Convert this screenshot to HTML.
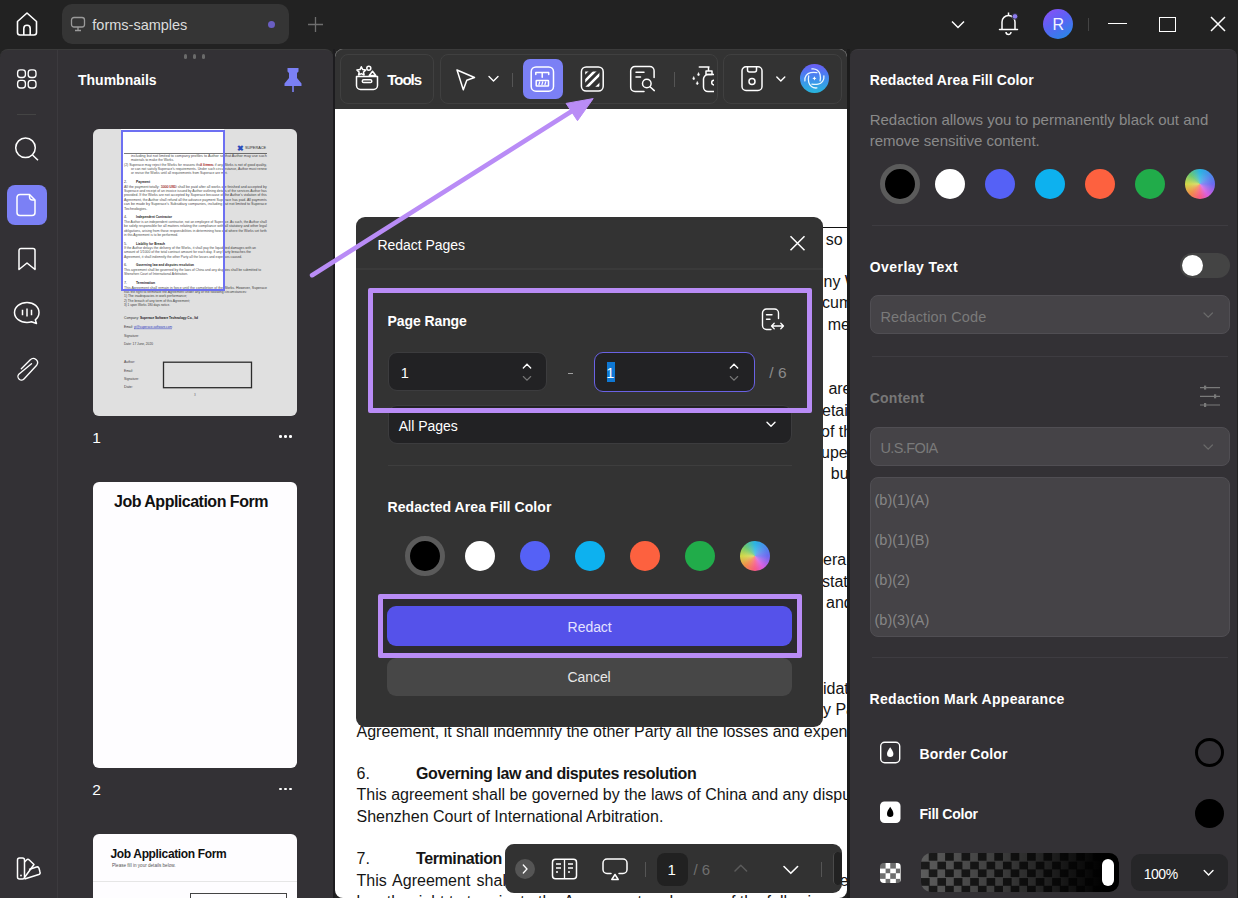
<!DOCTYPE html>
<html><head><meta charset="utf-8">
<style>
html,body{margin:0;padding:0;}
body{width:1238px;height:898px;overflow:hidden;position:relative;background:#222222;font-family:"Liberation Sans",sans-serif;}
.a{position:absolute;box-sizing:border-box;}
.t{position:absolute;white-space:nowrap;}
svg{overflow:visible}
</style></head><body>

<svg class="a" style="left:14px;top:10px;" width="26" height="28" viewBox="0 0 26 28"><path d="M3.5 11.5 L13 3 L22.5 11.5 V22.5 a2.5 2.5 0 0 1 -2.5 2.5 H6 a2.5 2.5 0 0 1 -2.5 -2.5 Z" fill="none" stroke="#fff" stroke-width="1.6" stroke-linejoin="round"/><path d="M9.8 25 V18.5 a3.2 3.2 0 0 1 6.4 0 V25" fill="none" stroke="#fff" stroke-width="1.6"/></svg>
<div class="a" style="left:62px;top:4px;width:227px;height:40px;background:#353535;border-radius:10px;"></div>
<svg class="a" style="left:70px;top:16px;" width="16" height="16" viewBox="0 0 16 16"><rect x="1.5" y="1.5" width="13" height="9.5" rx="2.5" fill="none" stroke="#9a9a9a" stroke-width="1.3"/><path d="M8 11 V14 M5 14.5 H11" stroke="#9a9a9a" stroke-width="1.3"/></svg>
<div class="t" style="left:92.3px;top:17.52px;font-size:14.5px;line-height:14.5px;color:#dcdcdc;font-weight:normal;letter-spacing:0px;">forms-samples</div>
<div class="a" style="left:268px;top:20.5px;width:7px;height:7px;background:#6a5ec2;border-radius:3.5px;"></div>
<svg class="a" style="left:308px;top:17px;" width="15" height="15" viewBox="0 0 15 15"><path d="M7.5 0 V15 M0 7.5 H15" stroke="#6e6e6e" stroke-width="1.3"/></svg>
<svg class="a" style="left:951px;top:20px;" width="14" height="9" viewBox="0 0 14 9"><path d="M1 1.5 L7 7.5 L13 1.5" fill="none" stroke="#fff" stroke-width="1.5"/></svg>
<svg class="a" style="left:998px;top:10px;" width="22" height="26" viewBox="0 0 22 26"><path d="M4 19 V12 a6.5 6.5 0 0 1 13 0 V19" fill="none" stroke="#fff" stroke-width="1.5"/><path d="M1.5 19.5 H19.5" stroke="#fff" stroke-width="1.5" stroke-linecap="round"/><path d="M8 22 a2.5 2.5 0 0 0 5 0" fill="none" stroke="#fff" stroke-width="1.5"/><path d="M10.5 2.5 V5" stroke="#fff" stroke-width="1.5"/><circle cx="17" cy="6.4" r="2.8" fill="#8d7cf0" stroke="#222" stroke-width="0.8"/></svg>
<div class="a" style="left:1043px;top:9px;width:30px;height:30px;border-radius:15px;background:linear-gradient(150deg,#8e4ef6 0%,#5a62f4 45%,#1f8fe4 100%);"></div>
<div class="t" style="left:1052.6px;top:16.55px;font-size:16px;line-height:16px;color:#f4f4ff;font-weight:normal;letter-spacing:0px;">R</div>
<div class="a" style="left:1088px;top:18px;width:1px;height:13px;background:#444;border-radius:0px;"></div>
<div class="a" style="left:1108px;top:23px;width:18.5px;height:1.3px;background:#fff;border-radius:0px;"></div>
<div class="a" style="left:1158.5px;top:17px;width:17.5px;height:14.5px;background:transparent;border-radius:0px;border:1.5px solid #fff;"></div>
<svg class="a" style="left:1210px;top:16px;" width="16" height="16" viewBox="0 0 16 16"><path d="M1 1 L15 15 M15 1 L1 15" stroke="#fff" stroke-width="1.5"/></svg>
<div class="a" style="left:0px;top:49px;width:333px;height:849px;background:#333135;border-radius:8px;border-top:1px solid #3b3b3b;border-bottom-left-radius:0;border-bottom-right-radius:0;"></div>
<div class="a" style="left:57px;top:50px;width:1px;height:848px;background:#3c3a3e;border-radius:0px;"></div>
<svg class="a" style="left:14px;top:66px;" width="26" height="26" viewBox="0 0 26 26"><rect x="3.6" y="3.9" width="7.8" height="7.6" rx="2.8" fill="none" stroke="#fff" stroke-width="1.35"/><rect x="3.6" y="14.4" width="7.8" height="7.6" rx="2.8" fill="none" stroke="#fff" stroke-width="1.35"/><rect x="14.2" y="3.9" width="7.8" height="7.6" rx="2.8" fill="none" stroke="#fff" stroke-width="1.35"/><rect x="14.2" y="14.4" width="7.8" height="7.6" rx="2.8" fill="none" stroke="#fff" stroke-width="1.35"/></svg>
<div class="a" style="left:16.5px;top:113.5px;width:19.5px;height:1px;background:#444;border-radius:0px;"></div>
<svg class="a" style="left:12px;top:134px;" width="28" height="28" viewBox="0 0 28 28"><circle cx="13.5" cy="13.8" r="9.8" fill="none" stroke="#fff" stroke-width="1.5"/><path d="M20.5 21 L26 26.3" stroke="#fff" stroke-width="1.5"/></svg>
<div class="a" style="left:7px;top:185px;width:40px;height:40px;background:#7b80f5;border-radius:8px;"></div>
<svg class="a" style="left:15px;top:192px;" width="24" height="26" viewBox="0 0 24 26"><path d="M5 2.5 H14.5 L20 8 V20.5 a3 3 0 0 1 -3 3 H5 a3 3 0 0 1 -3 -3 V5.5 a3 3 0 0 1 3 -3 Z" fill="none" stroke="#fff" stroke-width="1.5" stroke-linejoin="round"/><path d="M14.5 2.5 V5 a3 3 0 0 0 3 3 H20" fill="none" stroke="#fff" stroke-width="1.4"/></svg>
<svg class="a" style="left:16px;top:247px;" width="22" height="26" viewBox="0 0 22 26"><path d="M3 3.5 a2 2 0 0 1 2 -2 H17 a2 2 0 0 1 2 2 V22.5 L11 16 L3 22.5 Z" fill="none" stroke="#fff" stroke-width="1.5" stroke-linejoin="round"/></svg>
<svg class="a" style="left:12px;top:300px;" width="30" height="28" viewBox="0 0 30 28"><path d="M15 2.5 C22 2.5 27 6.8 27 12.5 C27 15.5 25.5 18 23.3 19.8 L24.5 23.5 L19.5 21.8 C18 22.3 16.5 22.5 15 22.5 C8 22.5 2.5 18.2 2.5 12.5 C2.5 6.8 8 2.5 15 2.5 Z" fill="none" stroke="#fff" stroke-width="1.5" stroke-linejoin="round"/><path d="M10.5 9.8 V15.2 M15 8.5 V16.5 M19.5 9.8 V15.2" stroke="#fff" stroke-width="1.5"/></svg>
<svg class="a" style="left:14px;top:355px;" width="28" height="30" viewBox="0 0 28 30"><path transform="translate(-14 -355)" d="M21.3 368.7 L30.3 359.8 A4.2 4.2 0 0 1 36.7 365.2 L24.2 378.8 A3.5 3.5 0 0 1 18.8 374.2 L31.5 363.8" fill="none" stroke="#fff" stroke-width="1.35" stroke-linecap="round" stroke-linejoin="round"/></svg>
<svg class="a" style="left:14px;top:855px;" width="28" height="28" viewBox="0 0 28 28"><rect x="3.5" y="3" width="7" height="21" rx="2" fill="none" stroke="#fff" stroke-width="1.5"/><path d="M10.5 7 L12.5 5 a2 2 0 0 1 2.8 0 L20 9.5 L10.5 22.5" fill="none" stroke="#fff" stroke-width="1.5" stroke-linejoin="round"/><path d="M15 14.5 L22.5 12 a2 2 0 0 1 2.5 1.3 L26 17 a2 2 0 0 1 -1.2 2.5 L10.5 24" fill="none" stroke="#fff" stroke-width="1.5" stroke-linejoin="round"/><circle cx="7" cy="20.5" r="0.9" fill="#fff"/></svg>
<div class="a" style="left:183.5px;top:54px;width:3px;height:5px;background:#6a6a6a;border-radius:1.5px;"></div>
<div class="a" style="left:192.5px;top:54px;width:3px;height:5px;background:#6a6a6a;border-radius:1.5px;"></div>
<div class="a" style="left:201.5px;top:54px;width:3px;height:5px;background:#6a6a6a;border-radius:1.5px;"></div>
<div class="t" style="left:78px;top:73.15px;font-size:14px;line-height:14px;color:#fff;font-weight:bold;letter-spacing:0px;">Thumbnails</div>
<svg class="a" style="left:282px;top:66px;" width="22" height="28" viewBox="0 0 22 28"><path d="M5.5 2 H16.5 V5.5 L15 7 V12 L19.5 17.5 V20 H2.5 V17.5 L7 12 V7 L5.5 5.5 Z" fill="#7b80f5"/><path d="M11 20 V26" stroke="#7b80f5" stroke-width="1.6"/></svg>
<div class="a" style="left:93px;top:129px;width:204px;height:287px;background:#fff;border-radius:6px;overflow:hidden;">
<svg class="a" style="left:0;top:0;font-family:'Liberation Sans',sans-serif" width="204" height="287"><rect x="31.0" y="24.0" width="143.0" height="0.7" fill="rgba(30,30,30,0.85)"/><text x="144" y="21.5" font-size="7.5" fill="#3358d8" font-weight="bold">&#10006;</text><text x="152.0" y="20.1" font-size="4" fill="#333" font-weight="normal" textLength="21.0" lengthAdjust="spacingAndGlyphs">SUPERACE</text><text x="38.0" y="27.9" font-size="3.7" fill="#4a4a4a" font-weight="normal" textLength="135.7" lengthAdjust="spacingAndGlyphs">including but not limited to company profiles to Author so that Author may use such</text><text x="38.0" y="32.3" font-size="3.7" fill="#4a4a4a" font-weight="normal" textLength="43.0" lengthAdjust="spacingAndGlyphs">materials to make the Works.</text><text x="31.0" y="36.8" font-size="3.7" fill="#4a4a4a" font-weight="normal" textLength="142.7" lengthAdjust="spacingAndGlyphs">(2)      Superace may reject the Works for reasons that 3 times if any Works is not of good quality,</text><text x="38.0" y="41.1" font-size="3.7" fill="#4a4a4a" font-weight="normal" textLength="135.7" lengthAdjust="spacingAndGlyphs">or can not satisfy Superace's requirements. Under such circumstance, Author must renew</text><text x="38.0" y="45.3" font-size="3.7" fill="#4a4a4a" font-weight="normal" textLength="96.5" lengthAdjust="spacingAndGlyphs">or revise the Works until all requirements from Superace are met.</text><text x="31.0" y="58.7" font-size="3.7" fill="#4a4a4a" font-weight="normal" textLength="142.7" lengthAdjust="spacingAndGlyphs">All the payment totally: 1000 USD shall be paid after all works are finished and accepted by</text><text x="31.0" y="63.1" font-size="3.7" fill="#4a4a4a" font-weight="normal" textLength="142.7" lengthAdjust="spacingAndGlyphs">Superace and receipt of an invoice issued by Author outlining details of the services Author has</text><text x="31.0" y="67.4" font-size="3.7" fill="#4a4a4a" font-weight="normal" textLength="142.7" lengthAdjust="spacingAndGlyphs">provided. If the Works are not accepted by Superace because of the Author's violation of this</text><text x="31.0" y="71.8" font-size="3.7" fill="#4a4a4a" font-weight="normal" textLength="142.7" lengthAdjust="spacingAndGlyphs">Agreement, the Author shall refund all the advance payment Superace has paid. All payments</text><text x="31.0" y="76.2" font-size="3.7" fill="#4a4a4a" font-weight="normal" textLength="142.7" lengthAdjust="spacingAndGlyphs">can be made by Superace's Subsidiary companies, including but not limited to Superace</text><text x="31.0" y="80.5" font-size="3.7" fill="#4a4a4a" font-weight="normal" textLength="23.3" lengthAdjust="spacingAndGlyphs">Technologies.</text><text x="31.0" y="93.7" font-size="3.7" fill="#4a4a4a" font-weight="normal" textLength="142.7" lengthAdjust="spacingAndGlyphs">The Author is an independent contractor, not an employee of Superace. As such, the Author shall</text><text x="31.0" y="98.1" font-size="3.7" fill="#4a4a4a" font-weight="normal" textLength="142.7" lengthAdjust="spacingAndGlyphs">be solely responsible for all matters relating the compliance with all statutory and other legal</text><text x="31.0" y="102.5" font-size="3.7" fill="#4a4a4a" font-weight="normal" textLength="142.7" lengthAdjust="spacingAndGlyphs">obligations, arising from those responsibilities in determining how and where the Works set forth</text><text x="31.0" y="106.8" font-size="3.7" fill="#4a4a4a" font-weight="normal" textLength="54.0" lengthAdjust="spacingAndGlyphs">in this Agreement is to be performed.</text><text x="31.0" y="119.9" font-size="3.7" fill="#4a4a4a" font-weight="normal" textLength="132.0" lengthAdjust="spacingAndGlyphs">If the Author delays the delivery of the Works, it shall pay the liquidated damages with an</text><text x="31.0" y="124.3" font-size="3.7" fill="#4a4a4a" font-weight="normal" textLength="127.0" lengthAdjust="spacingAndGlyphs">amount of 1/1000 of the total contract amount for each day. If any Party breaches the</text><text x="31.0" y="128.6" font-size="3.7" fill="#4a4a4a" font-weight="normal" textLength="118.0" lengthAdjust="spacingAndGlyphs">Agreement, it shall indemnify the other Party all the losses and expenses caused.</text><text x="31.0" y="141.8" font-size="3.7" fill="#4a4a4a" font-weight="normal" textLength="137.0" lengthAdjust="spacingAndGlyphs">This agreement shall be governed by the laws of China and any disputes shall be submitted to</text><text x="31.0" y="146.2" font-size="3.7" fill="#4a4a4a" font-weight="normal" textLength="64.0" lengthAdjust="spacingAndGlyphs">Shenzhen Court of International Arbitration.</text><text x="31.0" y="159.7" font-size="3.7" fill="#4a4a4a" font-weight="normal" textLength="143.0" lengthAdjust="spacingAndGlyphs">This Agreement shall remain in force until the completion of the Works. However, Superace</text><text x="31.0" y="163.9" font-size="3.7" fill="#4a4a4a" font-weight="normal" textLength="123.0" lengthAdjust="spacingAndGlyphs">has the right to terminate the Agreement under any of the following circumstances:</text><text x="31.0" y="168.3" font-size="3.7" fill="#4a4a4a" font-weight="normal" textLength="63.0" lengthAdjust="spacingAndGlyphs">1) The inadequacies in work performance;</text><text x="31.0" y="172.8" font-size="3.7" fill="#4a4a4a" font-weight="normal" textLength="66.0" lengthAdjust="spacingAndGlyphs">2) The breach of any term of this Agreement;</text><text x="31.0" y="177.0" font-size="3.7" fill="#4a4a4a" font-weight="normal" textLength="46.0" lengthAdjust="spacingAndGlyphs">3) 1 upon Works 180 days notice.</text><text x="31.0" y="207.8" font-size="3.7" fill="#4a4a4a" font-weight="normal" textLength="15.0" lengthAdjust="spacingAndGlyphs">Signature:</text><text x="31.0" y="216.3" font-size="3.7" fill="#4a4a4a" font-weight="normal" textLength="29.0" lengthAdjust="spacingAndGlyphs">Date: 17 June, 2020</text><text x="31.0" y="233.9" font-size="3.7" fill="#4a4a4a" font-weight="normal" textLength="11.0" lengthAdjust="spacingAndGlyphs">Author:</text><text x="31.0" y="242.5" font-size="3.7" fill="#4a4a4a" font-weight="normal" textLength="9.0" lengthAdjust="spacingAndGlyphs">Email:</text><text x="31.0" y="250.5" font-size="3.7" fill="#4a4a4a" font-weight="normal" textLength="15.0" lengthAdjust="spacingAndGlyphs">Signature:</text><text x="31.0" y="259.1" font-size="3.7" fill="#4a4a4a" font-weight="normal" textLength="9.0" lengthAdjust="spacingAndGlyphs">Date:</text><text x="31.0" y="54.3" font-size="3.7" fill="#333" font-weight="normal">2.</text><text x="43.0" y="54.3" font-size="3.7" fill="#222" font-weight="bold" textLength="14.0" lengthAdjust="spacingAndGlyphs">Payment</text><text x="31.0" y="89.3" font-size="3.7" fill="#333" font-weight="normal">4.</text><text x="43.0" y="89.3" font-size="3.7" fill="#222" font-weight="bold" textLength="36.0" lengthAdjust="spacingAndGlyphs">Independent Contractor</text><text x="31.0" y="115.5" font-size="3.7" fill="#333" font-weight="normal">5.</text><text x="43.0" y="115.5" font-size="3.7" fill="#222" font-weight="bold" textLength="29.0" lengthAdjust="spacingAndGlyphs">Liability for Breach</text><text x="31.0" y="137.4" font-size="3.7" fill="#333" font-weight="normal">6.</text><text x="43.0" y="137.4" font-size="3.7" fill="#222" font-weight="bold" textLength="58.0" lengthAdjust="spacingAndGlyphs">Governing law and disputes resolution</text><text x="31.0" y="155.3" font-size="3.7" fill="#333" font-weight="normal">7.</text><text x="43.0" y="155.3" font-size="3.7" fill="#222" font-weight="bold" textLength="19.0" lengthAdjust="spacingAndGlyphs">Termination</text><text x="31.0" y="190.3" font-size="3.7" fill="#3a3a3a" font-weight="normal" textLength="15.0" lengthAdjust="spacingAndGlyphs">Company:</text><text x="47.0" y="190.3" font-size="3.7" fill="#222" font-weight="bold" textLength="58.0" lengthAdjust="spacingAndGlyphs">Superace Software Technology Co., ltd</text><text x="31.0" y="199.3" font-size="3.7" fill="#3a3a3a" font-weight="normal" textLength="9.0" lengthAdjust="spacingAndGlyphs">Email:</text><text x="41.0" y="199.3" font-size="3.7" fill="#3344dd" font-weight="normal" textLength="38.0" lengthAdjust="spacingAndGlyphs">yt@superace-software.com</text><rect x="41.0" y="199.6" width="38.0" height="0.5" fill="#3344dd"/><text x="68.6" y="58.7" font-size="3.7" fill="#e03030" font-weight="normal" textLength="14.2" lengthAdjust="spacingAndGlyphs">1000 USD</text><text x="107.0" y="36.8" font-size="3.7" fill="#e03030" font-weight="normal" textLength="13.0" lengthAdjust="spacingAndGlyphs">3 times</text><rect x="70.5" y="233.2" width="88" height="25.5" fill="none" stroke="#333" stroke-width="1.3"/><text x="101.0" y="267.3" font-size="3" fill="#777" font-weight="normal">3</text></svg>
<div class="a" style="left:0;top:0;width:28px;height:287px;background:rgba(0,0,0,0.12)"></div>
<div class="a" style="left:131px;top:0;width:73px;height:287px;background:rgba(0,0,0,0.12)"></div>
<div class="a" style="left:28px;top:161px;width:103px;height:126px;background:rgba(0,0,0,0.12)"></div>
<div class="a" style="left:27.5px;top:0.5px;width:104px;height:161px;border:2.5px solid #6d70f2;"></div>
</div>
<div class="t" style="left:92.3px;top:430.08px;font-size:15.5px;line-height:15.5px;color:#fff;font-weight:normal;letter-spacing:0px;">1</div>
<div class="a" style="left:279.2px;top:435px;width:2.6px;height:2.6px;background:#fff;border-radius:1.3px;"></div>
<div class="a" style="left:284.2px;top:435px;width:2.6px;height:2.6px;background:#fff;border-radius:1.3px;"></div>
<div class="a" style="left:289.2px;top:435px;width:2.6px;height:2.6px;background:#fff;border-radius:1.3px;"></div>
<div class="a" style="left:93px;top:482px;width:204px;height:286px;background:#fefdff;border-radius:6px;"></div>
<div class="t" style="left:114px;top:493.95px;font-size:16px;line-height:16px;color:#111;font-weight:bold;letter-spacing:-0.5px;">Job Application Form</div>
<div class="t" style="left:92.3px;top:782.08px;font-size:15.5px;line-height:15.5px;color:#fff;font-weight:normal;letter-spacing:0px;">2</div>
<div class="a" style="left:279.2px;top:787.5px;width:2.6px;height:2.6px;background:#fff;border-radius:1.3px;"></div>
<div class="a" style="left:284.2px;top:787.5px;width:2.6px;height:2.6px;background:#fff;border-radius:1.3px;"></div>
<div class="a" style="left:289.2px;top:787.5px;width:2.6px;height:2.6px;background:#fff;border-radius:1.3px;"></div>
<div class="a" style="left:93px;top:834px;width:204px;height:80px;background:#fefdff;border-radius:6px;"></div>
<div class="t" style="left:110.5px;top:847.84px;font-size:12px;line-height:12px;color:#111;font-weight:bold;letter-spacing:-0.35px;">Job Application Form</div>
<div class="t" style="left:112px;top:864.11px;font-size:4.6px;line-height:4.6px;color:#555;font-weight:normal;letter-spacing:0px;">Please fill in your details below.</div>
<div class="a" style="left:93px;top:881px;width:204px;height:1px;background:#e6e6e6;border-radius:0px;"></div>
<div class="a" style="left:189.5px;top:892.5px;width:97px;height:10px;background:transparent;border-radius:0px;border:1px solid #444;"></div>
<div class="a" style="left:333px;top:49px;width:2px;height:849px;background:#1d1c1f;border-radius:0px;"></div>
<div class="a" style="left:847px;top:49px;width:3px;height:849px;background:#1c1c1c;border-radius:0px;"></div>
<div class="a" style="left:335px;top:49px;width:512px;height:849px;background:#fff;border-radius:8px;overflow:hidden;">
<div class="a" style="left:488px;top:178px;width:40px;height:1px;background:#111"></div>
<div class="t" style="left:490.7px;top:182.85px;font-size:16px;line-height:16px;color:#151515;font-weight:normal;letter-spacing:0px;">so</div>
<div class="t" style="left:488.5px;top:224.95px;font-size:16px;line-height:16px;color:#151515;font-weight:normal;letter-spacing:0px;">ny W</div>
<div class="t" style="left:487.0px;top:246.35px;font-size:16px;line-height:16px;color:#151515;font-weight:normal;letter-spacing:0px;">cum</div>
<div class="t" style="left:492.7px;top:267.75px;font-size:16px;line-height:16px;color:#151515;font-weight:normal;letter-spacing:0px;">me</div>
<div class="t" style="left:493.4px;top:332.15px;font-size:16px;line-height:16px;color:#151515;font-weight:normal;letter-spacing:0px;">are</div>
<div class="t" style="left:487.0px;top:353.55px;font-size:16px;line-height:16px;color:#151515;font-weight:normal;letter-spacing:0px;">etail</div>
<div class="t" style="left:486.0px;top:374.55px;font-size:16px;line-height:16px;color:#151515;font-weight:normal;letter-spacing:0px;">of th</div>
<div class="t" style="left:486.0px;top:395.65px;font-size:16px;line-height:16px;color:#151515;font-weight:normal;letter-spacing:0px;">uper</div>
<div class="t" style="left:495.8px;top:417.05px;font-size:16px;line-height:16px;color:#151515;font-weight:normal;letter-spacing:0px;">bu</div>
<div class="t" style="left:488.0px;top:503.45px;font-size:16px;line-height:16px;color:#151515;font-weight:normal;letter-spacing:0px;">era</div>
<div class="t" style="left:487.0px;top:524.55px;font-size:16px;line-height:16px;color:#151515;font-weight:normal;letter-spacing:0px;">stat</div>
<div class="t" style="left:491.0px;top:545.55px;font-size:16px;line-height:16px;color:#151515;font-weight:normal;letter-spacing:0px;">and</div>
<div class="t" style="left:488.0px;top:631.75px;font-size:16px;line-height:16px;color:#151515;font-weight:normal;letter-spacing:0px;">idat</div>
<div class="t" style="left:488.0px;top:652.85px;font-size:16px;line-height:16px;color:#151515;font-weight:normal;letter-spacing:0px;">y Pa</div>
<div class="t" style="left:21.5px;top:674.95px;font-size:16px;line-height:16px;color:#151515;font-weight:normal;letter-spacing:0px;">Agreement, it shall indemnify the other Party all the losses and expenses</div>
<div class="t" style="left:21.5px;top:716.85px;font-size:16px;line-height:16px;color:#151515;font-weight:normal;letter-spacing:0px;">6.</div>
<div class="t" style="left:81.0px;top:716.85px;font-size:16px;line-height:16px;color:#151515;font-weight:bold;letter-spacing:-0.4px;">Governing law and disputes resolution</div>
<div class="t" style="left:21.5px;top:738.45px;font-size:16px;line-height:16px;color:#151515;font-weight:normal;letter-spacing:0px;">This agreement shall be governed by the laws of China and any disputes</div>
<div class="t" style="left:21.5px;top:759.85px;font-size:16px;line-height:16px;color:#151515;font-weight:normal;letter-spacing:0px;">Shenzhen Court of International Arbitration.</div>
<div class="t" style="left:21.5px;top:802.45px;font-size:16px;line-height:16px;color:#151515;font-weight:normal;letter-spacing:0px;">7.</div>
<div class="t" style="left:81.0px;top:802.45px;font-size:16px;line-height:16px;color:#151515;font-weight:bold;letter-spacing:-0.4px;">Termination</div>
<div class="t" style="left:21.5px;top:823.75px;font-size:16px;line-height:16px;color:#151515;font-weight:normal;letter-spacing:0px;word-spacing:1.8px;">This Agreement shall remain in force</div>
<div class="t" style="left:504.8px;top:823.75px;font-size:16px;line-height:16px;color:#151515;font-weight:normal;letter-spacing:0px;">e</div>
<div class="t" style="left:21.5px;top:845.05px;font-size:16px;line-height:16px;color:#151515;font-weight:normal;letter-spacing:0px;">has the right to terminate the Agreement under any of the following</div>
</div>
<div class="a" style="left:335px;top:49px;width:512px;height:60px;background:#333333;border-radius:8px 8px 0 0;border-top:1px solid #3b3b3b;overflow:hidden;">
</div>
<div class="a" style="left:340px;top:54px;width:94px;height:50px;border:1px solid #404040;border-radius:8px;background:#333333;"></div>
<div class="a" style="left:440px;top:54px;width:278px;height:50px;border:1px solid #404040;border-radius:8px;background:#333333;"></div>
<div class="a" style="left:723px;top:54px;width:119px;height:50px;border:1px solid #404040;border-radius:8px;background:#333333;"></div>
<svg class="a" style="left:354px;top:64px;" width="26" height="28" viewBox="0 0 26 28"><path d="M2.5 12.5 H23.5 V21.5 a4 4 0 0 1 -4 4 H6.5 a4 4 0 0 1 -4 -4 Z" fill="none" stroke="#fff" stroke-width="1.5" stroke-linecap="round" stroke-linejoin="round"/><rect x="8.3" y="15.8" width="9.5" height="2.7" rx="1.35" fill="none" stroke="#fff" stroke-width="1.5" stroke-linecap="round" stroke-linejoin="round"/><path d="M7.3 2.8 L8.7 5.6 L11.8 6 L9.5 8.1 L10.1 11 L7.3 9.6 L4.6 11 L5.1 8.1 L2.9 6 L6 5.6 Z" fill="none" stroke="#fff" stroke-width="1.5" stroke-linecap="round" stroke-linejoin="round"/><circle cx="14.8" cy="4.2" r="2" fill="none" stroke="#fff" stroke-width="1.5" stroke-linecap="round" stroke-linejoin="round"/><path d="M18.5 7.2 L21.8 11.5 H15.3 Z" fill="none" stroke="#fff" stroke-width="1.5" stroke-linecap="round" stroke-linejoin="round"/></svg>
<div class="t" style="left:387.2px;top:72.20px;font-size:15px;line-height:15px;color:#fff;font-weight:bold;letter-spacing:-1px;">Tools</div>
<svg class="a" style="left:454px;top:67px;" width="24" height="26" viewBox="0 0 24 26"><path d="M3 3 L20.5 10.5 L12.8 13.2 L9.3 22.8 Z" fill="none" stroke="#fff" stroke-width="1.5" stroke-linecap="round" stroke-linejoin="round"/></svg>
<svg class="a" style="left:487px;top:74px;" width="14" height="10" viewBox="0 0 14 10"><path d="M2 2.5 L6.5 7 L11 2.5" fill="none" stroke="#fff" stroke-width="1.4" stroke-linecap="round" stroke-linejoin="round"/></svg>
<div class="a" style="left:512px;top:72.5px;width:1px;height:14.5px;background:#555;border-radius:0px;"></div>
<div class="a" style="left:523px;top:59px;width:40px;height:40px;background:#7b80f5;border-radius:7px;"></div>
<svg class="a" style="left:529px;top:65px;" width="27" height="28" viewBox="0 0 27 28"><rect x="2.2" y="1.9" width="22.3" height="24.3" rx="4.8" fill="none" stroke="#fff" stroke-width="1.5" stroke-linecap="round" stroke-linejoin="round"/><path d="M6.8 9.6 V7.4 H19.7 V9.6 M13.2 7.4 V12.2" fill="none" stroke="#fff" stroke-width="1.5" stroke-linecap="round" stroke-linejoin="round"/><rect x="7.2" y="15.6" width="12.3" height="5.3" rx="0.5" fill="none" stroke="#fff" stroke-width="1.5" stroke-linecap="round" stroke-linejoin="round"/><path d="M9.8 20 L10.8 16.5 M12.8 20 L13.8 16.5 M15.8 20 L16.8 16.5" stroke="#fff" stroke-width="1.2"/></svg>
<svg class="a" style="left:579px;top:65px;" width="27" height="28" viewBox="0 0 27 28"><rect x="2.4" y="1.9" width="21.8" height="24.2" rx="4.8" fill="none" stroke="#fff" stroke-width="1.5" stroke-linecap="round" stroke-linejoin="round"/><defs><clipPath id="hc"><rect x="6.2" y="6.4" width="14.2" height="15.4"/></clipPath></defs><g clip-path="url(#hc)" stroke="#fff" stroke-width="2.6"><path d="M0 14 L14 0 M0 22 L22 0 M4 26 L26 4 M12 28 L28 12 M18 30 L30 18"/></g></svg>
<svg class="a" style="left:629px;top:65px;" width="28" height="28" viewBox="0 0 28 28"><path d="M15 26.5 H6 a4.3 4.3 0 0 1 -4.3 -4.3 V5.8 a4.3 4.3 0 0 1 4.3 -4.3 H20.8 a4.3 4.3 0 0 1 4.3 4.3 V12.5" fill="none" stroke="#fff" stroke-width="1.5" stroke-linecap="round" stroke-linejoin="round"/><path d="M7 7.2 H15 M7 12 H11.5" fill="none" stroke="#fff" stroke-width="1.5" stroke-linecap="round" stroke-linejoin="round"/><circle cx="17.8" cy="18.5" r="4.3" fill="none" stroke="#fff" stroke-width="1.5" stroke-linecap="round" stroke-linejoin="round"/><path d="M21 21.8 L25.3 25.6" fill="none" stroke="#fff" stroke-width="1.5" stroke-linecap="round" stroke-linejoin="round"/></svg>
<div class="a" style="left:673.5px;top:72.2px;width:1px;height:14.5px;background:#555;border-radius:0px;"></div>
<div class="a" style="left:688px;top:60px;width:25.5px;height:36px;overflow:hidden;">
<svg class="a" style="left:0;top:0" width="40" height="36" viewBox="0 0 40 36"><path d="M11.3 6.9 H21 M20.5 6.9 V11 M18 11 H24 V14.5 H18 Z" fill="none" stroke="#fff" stroke-width="1.5" stroke-linecap="round" stroke-linejoin="round"/><path d="M30 14.6 H20 a4.5 4.5 0 0 0 -4.5 4.5 V27 a4.5 4.5 0 0 0 4.5 4.5 H30" fill="none" stroke="#fff" stroke-width="1.5" stroke-linecap="round" stroke-linejoin="round"/><circle cx="26" cy="22.6" r="2.3" fill="none" stroke="#fff" stroke-width="1.5" stroke-linecap="round" stroke-linejoin="round"/><path d="M10.5 12.6 l1 2.3 a1.1 1.1 0 0 1 -2 0 Z M5.7 16.6 l1 2.3 a1.1 1.1 0 0 1 -2 0 Z M9.3 21.5 l1 2.3 a1.1 1.1 0 0 1 -2 0 Z" fill="#fff" stroke="#fff" stroke-width="0.6"/></svg>
</div>
<svg class="a" style="left:740px;top:65px;" width="24" height="27" viewBox="0 0 24 27"><path d="M6 1.8 H18 a4 4 0 0 1 4 4 V21.5 a4 4 0 0 1 -4 4 H6 a4 4 0 0 1 -4 -4 V5.8 a4 4 0 0 1 4 -4 Z" fill="none" stroke="#fff" stroke-width="1.5" stroke-linecap="round" stroke-linejoin="round"/><path d="M7.5 2 V5 a2 2 0 0 0 2 2 H14.5 a2 2 0 0 0 2 -2 V2" fill="none" stroke="#fff" stroke-width="1.5" stroke-linecap="round" stroke-linejoin="round"/><circle cx="12" cy="16.5" r="3" fill="none" stroke="#fff" stroke-width="1.5" stroke-linecap="round" stroke-linejoin="round"/></svg>
<svg class="a" style="left:775px;top:75px;" width="12" height="9" viewBox="0 0 12 9"><path d="M1.8 2 L5.8 6 L9.8 2" fill="none" stroke="#fff" stroke-width="1.4" stroke-linecap="round" stroke-linejoin="round"/></svg>
<div class="a" style="left:799.8px;top:63.9px;width:28.8px;height:28.8px;border-radius:50%;background:linear-gradient(180deg,#6c5df5 0%,#4f78f2 30%,#3d95ea 60%,#27b5dc 100%);"></div>
<svg class="a" style="left:799.8px;top:63.9px;" width="29" height="29" viewBox="0 0 29 29"><path transform="rotate(0 14.4 14.4)" d="M4.9 16.9 C4.3 12.6 7.2 9.4 10.6 8.7 C12.8 8.2 15 8.3 16.9 8.7" fill="none" stroke="#e9f7ff" stroke-width="1.3" stroke-linecap="round"/><path transform="rotate(90 14.4 14.4)" d="M4.9 16.9 C4.3 12.6 7.2 9.4 10.6 8.7 C12.8 8.2 15 8.3 16.9 8.7" fill="none" stroke="#e9f7ff" stroke-width="1.3" stroke-linecap="round"/><path transform="rotate(180 14.4 14.4)" d="M4.9 16.9 C4.3 12.6 7.2 9.4 10.6 8.7 C12.8 8.2 15 8.3 16.9 8.7" fill="none" stroke="#e9f7ff" stroke-width="1.3" stroke-linecap="round"/><path transform="rotate(270 14.4 14.4)" d="M4.9 16.9 C4.3 12.6 7.2 9.4 10.6 8.7 C12.8 8.2 15 8.3 16.9 8.7" fill="none" stroke="#e9f7ff" stroke-width="1.3" stroke-linecap="round"/><path d="M14.4 12.3 L15.1 13.7 L16.5 14.4 L15.1 15.1 L14.4 16.5 L13.7 15.1 L12.3 14.4 L13.7 13.7 Z" fill="#fff"/></svg>
<div class="a" style="left:505px;top:844px;width:337px;height:49px;background:#323232;border-radius:9px;"></div>
<div class="a" style="left:514.7px;top:859px;width:20px;height:20px;background:#555555;border-radius:10px;"></div>
<svg class="a" style="left:520px;top:863px;" width="10" height="12" viewBox="0 0 10 12"><path d="M3.3 2 L7 6 L3.3 10" fill="none" stroke="#fff" stroke-width="1.3" stroke-linecap="round"/></svg>
<svg class="a" style="left:551px;top:858px;" width="27" height="22" viewBox="0 0 27 22"><rect x="1.5" y="1.2" width="24" height="19.5" rx="3" fill="none" stroke="#fff" stroke-width="1.5" stroke-linecap="round" stroke-linejoin="round"/><path d="M13.5 1.2 V20.7 M5 6 H10 M5 10 H10 M5 14 H7 M17 6 H22 M17 10 H22 M17 14 H19" stroke="#fff" stroke-width="1.3"/></svg>
<svg class="a" style="left:601px;top:857px;" width="28" height="25" viewBox="0 0 28 25"><path d="M10 16.5 H6 a4 4 0 0 1 -4 -4 V6 a4 4 0 0 1 4 -4 H22 a4 4 0 0 1 4 4 V12.5 a4 4 0 0 1 -4 4 H18" fill="none" stroke="#fff" stroke-width="1.5" stroke-linecap="round" stroke-linejoin="round"/><path d="M14 17.5 L17.2 22.5 H10.8 Z" fill="none" stroke="#fff" stroke-width="1.5" stroke-linecap="round" stroke-linejoin="round"/></svg>
<div class="a" style="left:645px;top:862px;width:1px;height:15px;background:#555;border-radius:0px;"></div>
<div class="a" style="left:656.5px;top:852.5px;width:31px;height:33.5px;background:#212121;border-radius:8px;"></div>
<div class="t" style="left:667.5px;top:862.30px;font-size:15px;line-height:15px;color:#fff;font-weight:normal;letter-spacing:0px;">1</div>
<div class="t" style="left:693.5px;top:862.30px;font-size:15px;line-height:15px;color:#6e6e6e;font-weight:normal;letter-spacing:0px;">/ 6</div>
<svg class="a" style="left:733px;top:862px;" width="16" height="12" viewBox="0 0 16 12"><path d="M2 9 L7.8 3.3 L13.6 9" fill="none" stroke="#5b5b5b" stroke-width="1.5" stroke-linecap="round" stroke-linejoin="round"/></svg>
<svg class="a" style="left:782px;top:863px;" width="18" height="14" viewBox="0 0 18 14"><path d="M2 3.5 L8.8 10.3 L15.6 3.5" fill="none" stroke="#fff" stroke-width="1.6" stroke-linecap="round" stroke-linejoin="round"/></svg>
<div class="a" style="left:821px;top:862px;width:1px;height:15px;background:#555;border-radius:0px;"></div>
<div class="a" style="left:832.5px;top:852px;width:9px;height:33px;background:#222222;border-radius:4.5px;border-left:1px solid #4a4a4a;"></div>
<div class="a" style="left:850px;top:49px;width:387px;height:849px;background:#333135;border-radius:8px 8px 0 0;border-top:1px solid #3b393d;"></div>
<div class="t" style="left:869.7px;top:73.25px;font-size:14px;line-height:14px;color:#fff;font-weight:bold;letter-spacing:0.08px;">Redacted Area Fill Color</div>
<div class="t" style="left:869.7px;top:112.10px;font-size:15px;line-height:15px;color:#8a8a8a;font-weight:normal;letter-spacing:0px;">Redaction allows you to permanently black out and</div>
<div class="t" style="left:869.7px;top:132.50px;font-size:15px;line-height:15px;color:#8a8a8a;font-weight:normal;letter-spacing:0px;">remove sensitive content.</div>
<div class="a" style="left:879.7px;top:163.6px;width:40px;height:40px;background:#000;border-radius:20px;border:5px solid #5b5b5b;"></div>
<div class="a" style="left:934.7px;top:168.6px;width:30px;height:30px;border-radius:15px;background:#ffffff;"></div>
<div class="a" style="left:984.7px;top:168.6px;width:30px;height:30px;border-radius:15px;background:#5561f6;"></div>
<div class="a" style="left:1034.7px;top:168.6px;width:30px;height:30px;border-radius:15px;background:#0db1ef;"></div>
<div class="a" style="left:1084.7px;top:168.6px;width:30px;height:30px;border-radius:15px;background:#fd613f;"></div>
<div class="a" style="left:1134.7px;top:168.6px;width:30px;height:30px;border-radius:15px;background:#21ac4a;"></div>
<div class="a" style="left:1184.7px;top:168.6px;width:30px;height:30px;border-radius:15px;background:radial-gradient(circle,rgba(255,255,255,0.25) 0%,rgba(255,255,255,0) 60%),conic-gradient(from 0deg,#2ab3e3,#6a6af0 25%,#d65ee0 40%,#f75a86 50%,#f08a4a 62%,#d2d84a 75%,#6cc870 87%,#2ab3e3);"></div>
<div class="a" style="left:871.5px;top:224.5px;width:356px;height:1px;background:#3e3c41;border-radius:0px;"></div>
<div class="t" style="left:869.7px;top:260.35px;font-size:14px;line-height:14px;color:#fff;font-weight:bold;letter-spacing:0.45px;">Overlay Text</div>
<div class="a" style="left:1180px;top:253px;width:50px;height:24.5px;background:#444444;border-radius:12.25px;"></div>
<div class="a" style="left:1181.7px;top:254.8px;width:21px;height:21px;background:#ffffff;border-radius:10.5px;"></div>
<div class="a" style="left:870px;top:295.2px;width:359.5px;height:39.3px;background:#454347;border:1px solid #504e53;border-radius:8px;"></div>
<div class="t" style="left:880.4px;top:309.72px;font-size:14.5px;line-height:14.5px;color:#7a7a7a;font-weight:normal;letter-spacing:0.15px;">Redaction Code</div>
<svg class="a" style="left:1202px;top:311px;" width="12" height="9" viewBox="0 0 12 9"><path d="M2 2 L6.2 6.2 L10.4 2" fill="none" stroke="#6a6a6a" stroke-width="1.2" stroke-linecap="round"/></svg>
<div class="a" style="left:871.5px;top:355.5px;width:356px;height:1px;background:#3e3c41;border-radius:0px;"></div>
<div class="t" style="left:869.7px;top:391.35px;font-size:14px;line-height:14px;color:#777777;font-weight:bold;letter-spacing:0.25px;">Content</div>
<svg class="a" style="left:1198px;top:383px;" width="24" height="26" viewBox="0 0 24 26"><g stroke="#7a7a7a" stroke-width="1.2"><path d="M2 4.6 H22 M2 13.3 H22 M2 22 H22"/></g><g fill="#7a7a7a"><rect x="6" y="2.6" width="2.2" height="4"/><rect x="16" y="11.3" width="2.2" height="4"/><rect x="6" y="20" width="2.2" height="4"/></g></svg>
<div class="a" style="left:870px;top:427px;width:359.5px;height:39px;background:#454347;border:1px solid #504e53;border-radius:8px;"></div>
<div class="t" style="left:880.4px;top:441.02px;font-size:14.5px;line-height:14.5px;color:#7a7a7a;font-weight:normal;letter-spacing:-0.6px;">U.S.FOIA</div>
<svg class="a" style="left:1202px;top:443px;" width="12" height="9" viewBox="0 0 12 9"><path d="M2 2 L6.2 6.2 L10.4 2" fill="none" stroke="#6a6a6a" stroke-width="1.2" stroke-linecap="round"/></svg>
<div class="a" style="left:870px;top:477px;width:359.5px;height:159.5px;background:#454347;border:1px solid #504e53;border-radius:8px;"></div>
<div class="t" style="left:874.5px;top:492.72px;font-size:14.5px;line-height:14.5px;color:#868686;font-weight:normal;letter-spacing:0px;">(b)(1)(A)</div>
<div class="t" style="left:874.5px;top:532.82px;font-size:14.5px;line-height:14.5px;color:#868686;font-weight:normal;letter-spacing:0px;">(b)(1)(B)</div>
<div class="t" style="left:874.5px;top:572.92px;font-size:14.5px;line-height:14.5px;color:#868686;font-weight:normal;letter-spacing:0px;">(b)(2)</div>
<div class="t" style="left:874.5px;top:613.02px;font-size:14.5px;line-height:14.5px;color:#868686;font-weight:normal;letter-spacing:0px;">(b)(3)(A)</div>
<div class="a" style="left:871.5px;top:657px;width:356px;height:1px;background:#3e3c41;border-radius:0px;"></div>
<div class="t" style="left:869.6px;top:692.15px;font-size:14px;line-height:14px;color:#fff;font-weight:bold;letter-spacing:0.29px;">Redaction Mark Appearance</div>
<svg class="a" style="left:878px;top:740px;" width="24" height="25" viewBox="0 0 24 25"><rect x="2.7" y="2.3" width="19" height="20.5" rx="4" fill="none" stroke="#fff" stroke-width="1.4"/><path d="M12.2 7.2 C10.5 9.7 9 11.5 9 13.8 a3.2 3.2 0 0 0 6.4 0 C15.4 11.5 13.9 9.7 12.2 7.2 Z" fill="#fff"/></svg>
<div class="t" style="left:919.5px;top:747.35px;font-size:14px;line-height:14px;color:#fff;font-weight:bold;letter-spacing:0.15px;">Border Color</div>
<div class="a" style="left:1195.3px;top:738.1px;width:29px;height:29px;background:transparent;border-radius:14.5px;border:3px solid #000;"></div>
<svg class="a" style="left:878px;top:800px;" width="24" height="25" viewBox="0 0 24 25"><rect x="2" y="1.5" width="20.5" height="21.5" rx="4.5" fill="#fff"/><path d="M12.2 6.8 C10.5 9.5 9 11.3 9 13.7 a3.2 3.2 0 0 0 6.4 0 C15.4 11.3 13.9 9.5 12.2 6.8 Z" fill="#000"/></svg>
<div class="t" style="left:919.5px;top:807.05px;font-size:14px;line-height:14px;color:#fff;font-weight:bold;letter-spacing:-0.25px;">Fill Color</div>
<div class="a" style="left:1195.3px;top:798.5px;width:29px;height:29px;background:#000;border-radius:14.5px;"></div>
<div class="a" style="left:880px;top:862.5px;width:20.5px;height:20.5px;border-radius:4px;background:conic-gradient(#ffffff 25%,#6e6e6e 0 50%,#ffffff 0 75%,#6e6e6e 0) 0 0/10.25px 10.25px;"></div>
<div class="a" style="left:920.5px;top:853.2px;width:198px;height:39px;border-radius:10px;overflow:hidden;background:conic-gradient(#1a1a1a 25%,#5c5c5c 0 50%,#1a1a1a 0 75%,#5c5c5c 0) 0 0/16.4px 16.4px;"><div class="a" style="left:0;top:0;width:100%;height:100%;background:linear-gradient(90deg,rgba(0,0,0,0) 0%,rgba(0,0,0,0.35) 40%,rgba(0,0,0,1) 92%);"></div></div>
<div class="a" style="left:1101.8px;top:858.5px;width:12.7px;height:27.7px;background:#ffffff;border-radius:6.3px;"></div>
<div class="a" style="left:1130.7px;top:854px;width:97.5px;height:37.4px;background:#262628;border-radius:9px;"></div>
<div class="t" style="left:1143.8px;top:867.15px;font-size:14px;line-height:14px;color:#ffffff;font-weight:normal;letter-spacing:-0.5px;">100%</div>
<svg class="a" style="left:1202px;top:868px;" width="14" height="10" viewBox="0 0 14 10"><path d="M2.2 2.5 L6.6 6.9 L11 2.5" fill="none" stroke="#fff" stroke-width="1.4" stroke-linecap="round"/></svg>
<div class="a" style="left:356px;top:217px;width:467px;height:509.5px;background:#333333;border-radius:9px;"></div>
<div class="t" style="left:377.5px;top:237.95px;font-size:14px;line-height:14px;color:#ffffff;font-weight:normal;letter-spacing:-0.05px;">Redact Pages</div>
<svg class="a" style="left:789px;top:235px;" width="17" height="17" viewBox="0 0 17 17"><path d="M1.5 1.2 L15.5 15.3 M15.5 1.2 L1.5 15.3" stroke="#fff" stroke-width="1.5"/></svg>
<div class="a" style="left:356px;top:268px;width:467px;height:2px;background:#3a3a3a;border-radius:0px;"></div>
<div class="t" style="left:387.6px;top:313.95px;font-size:14px;line-height:14px;color:#ffffff;font-weight:bold;letter-spacing:-0.1px;">Page Range</div>
<svg class="a" style="left:760px;top:307px;" width="26" height="26" viewBox="0 0 26 26"><path d="M11 22.5 H6.5 a4 4 0 0 1 -4 -4 V6 a4 4 0 0 1 4 -4 H14.5 a4 4 0 0 1 4 4 V11.5" fill="none" stroke="#fff" stroke-width="1.4" stroke-linecap="round"/><path d="M6.5 7.8 H12 M6.5 12.2 H10" stroke="#fff" stroke-width="1.4" stroke-linecap="round"/><path d="M11.5 19 H23.5 M14.2 16.3 L11.5 19 L14.2 21.7 M20.8 16.3 L23.5 19 L20.8 21.7" fill="none" stroke="#fff" stroke-width="1.3" stroke-linecap="round" stroke-linejoin="round"/></svg>
<div class="a" style="left:388px;top:352.4px;width:159px;height:39px;background:#222224;border:1px solid #3c3c3e;border-radius:9px;"></div>
<div class="t" style="left:400.8px;top:365.62px;font-size:14.5px;line-height:14.5px;color:#ffffff;font-weight:normal;letter-spacing:0px;">1</div>
<svg class="a" style="left:521px;top:361px;" width="12" height="22" viewBox="0 0 12 22"><path d="M2.3 7 L6 3.2 L9.7 7" fill="none" stroke="#fff" stroke-width="1.3" stroke-linecap="round"/><path d="M2.3 15.5 L6 19.2 L9.7 15.5" fill="none" stroke="#777" stroke-width="1.1" stroke-linecap="round"/></svg>
<div class="a" style="left:567.5px;top:372.8px;width:5px;height:1.3px;background:#a0a0a0;border-radius:0px;"></div>
<div class="a" style="left:594px;top:352.2px;width:161px;height:39.6px;background:#222224;border:1.3px solid #6a62e4;border-radius:9px;"></div>
<div class="a" style="left:606.7px;top:362px;width:8.5px;height:20px;background:#0f78d4;border-radius:0px;"></div>
<div class="t" style="left:606.3px;top:365.62px;font-size:14.5px;line-height:14.5px;color:#ffffff;font-weight:normal;letter-spacing:0px;">1</div>
<svg class="a" style="left:728px;top:361px;" width="12" height="22" viewBox="0 0 12 22"><path d="M2.3 7 L6 3.2 L9.7 7" fill="none" stroke="#fff" stroke-width="1.3" stroke-linecap="round"/><path d="M2.3 15.5 L6 19.2 L9.7 15.5" fill="none" stroke="#777" stroke-width="1.1" stroke-linecap="round"/></svg>
<div class="t" style="left:769.3px;top:364.58px;font-size:15.5px;line-height:15.5px;color:#8a8a8a;font-weight:normal;letter-spacing:0px;">/ 6</div>
<div class="a" style="left:388px;top:405px;width:403.5px;height:38.5px;background:#222224;border:1px solid #3c3c3e;border-radius:9px;"></div>
<div class="t" style="left:398.7px;top:419.35px;font-size:14px;line-height:14px;color:#ffffff;font-weight:normal;letter-spacing:0px;">All Pages</div>
<svg class="a" style="left:765px;top:419px;" width="12" height="10" viewBox="0 0 12 10"><path d="M2 3.2 L6 7.2 L10 3.2" fill="none" stroke="#fff" stroke-width="1.4" stroke-linecap="round" stroke-linejoin="round"/></svg>
<div class="a" style="left:388px;top:465px;width:403.5px;height:1px;background:#3e3e3e;border-radius:0px;"></div>
<div class="t" style="left:387.5px;top:500.35px;font-size:14px;line-height:14px;color:#ffffff;font-weight:bold;letter-spacing:0.08px;">Redacted Area Fill Color</div>
<div class="a" style="left:404.9px;top:535.8px;width:40px;height:40px;background:#000;border-radius:20px;border:5px solid #5b5b5b;"></div>
<div class="a" style="left:464.9px;top:540.8px;width:30px;height:30px;border-radius:15px;background:#ffffff;"></div>
<div class="a" style="left:519.9px;top:540.8px;width:30px;height:30px;border-radius:15px;background:#5561f6;"></div>
<div class="a" style="left:574.9px;top:540.8px;width:30px;height:30px;border-radius:15px;background:#0db1ef;"></div>
<div class="a" style="left:629.9px;top:540.8px;width:30px;height:30px;border-radius:15px;background:#fd613f;"></div>
<div class="a" style="left:684.9px;top:540.8px;width:30px;height:30px;border-radius:15px;background:#21ac4a;"></div>
<div class="a" style="left:739.9px;top:540.8px;width:30px;height:30px;border-radius:15px;background:radial-gradient(circle,rgba(255,255,255,0.25) 0%,rgba(255,255,255,0) 60%),conic-gradient(from 0deg,#2ab3e3,#6a6af0 25%,#d65ee0 40%,#f75a86 50%,#f08a4a 62%,#d2d84a 75%,#6cc870 87%,#2ab3e3);"></div>
<div class="a" style="left:382.5px;top:598.7px;width:414.3px;height:54px;background:#2d2b31;border-radius:0px;"></div>
<div class="a" style="left:387.2px;top:605.9px;width:405px;height:40px;background:#5552ea;border-radius:9px;"></div>
<div class="t" style="left:567.6px;top:620.25px;font-size:14px;line-height:14px;color:#e4e2ff;font-weight:normal;letter-spacing:-0.05px;">Redact</div>
<div class="a" style="left:387.2px;top:658.3px;width:405px;height:38px;background:#474747;border-radius:9px;"></div>
<div class="t" style="left:567.6px;top:669.95px;font-size:14px;line-height:14px;color:#e8e8e8;font-weight:normal;letter-spacing:-0.1px;">Cancel</div>
<div class="a" style="left:367.7px;top:288.2px;width:444px;height:124.6px;border:5.2px solid #b98cf6;border-radius:2px;"></div>
<div class="a" style="left:377.5px;top:593.7px;width:424.3px;height:64.2px;border:5.2px solid #b98cf6;border-radius:2px;"></div>
<svg class="a" style="left:0px;top:0px;" width="1238" height="898" viewBox="0 0 1238 898"><path d="M312.1 275.2 L576 108.5" stroke="#b98cf6" stroke-width="4.6" stroke-linecap="round"/><path d="M593.2 98.6 L566.1 103.4 L577.5 120.7 Z" fill="#b98cf6" stroke="#b98cf6" stroke-width="1" stroke-linejoin="round"/></svg>
</body></html>
